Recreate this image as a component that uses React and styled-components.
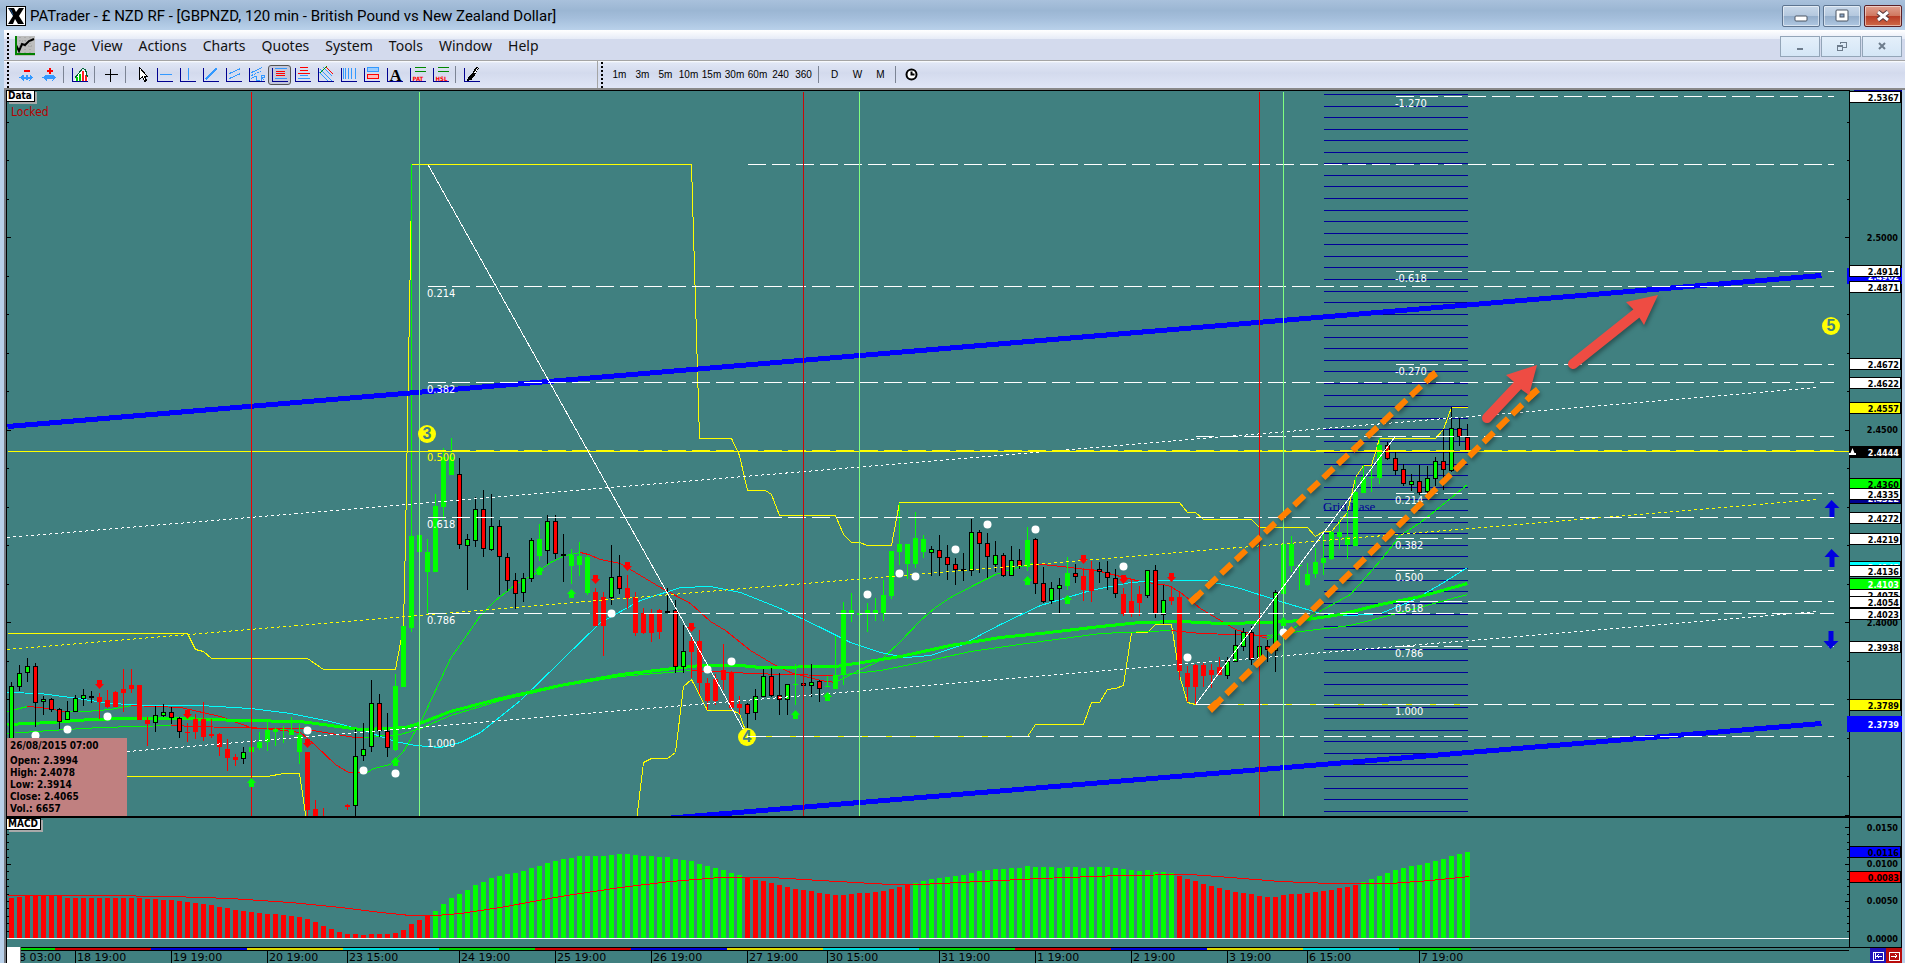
import React from 'react';
import styled, { createGlobalStyle, css } from 'styled-components';

const TEAL = '#408080';
const UI_FONT = '"Noto Sans", "Open Sans", sans-serif';
const CHART_FONT = '"DejaVu Sans Condensed", "DejaVu Sans", sans-serif';

// chart origin inside the window, all chart data is stored in window pixels
const LEFT = 7;
const TOP = 90;
const MACD_TOP = 818;
const TIME_TOP = 947;

const menus = ['Page', 'View', 'Actions', 'Charts', 'Quotes', 'System', 'Tools', 'Window', 'Help'];
const minutes = ['1m', '3m', '5m', '10m', '15m', '30m', '60m', '240', '360'];
const periods = ['D', 'W', 'M'];

// kind, high, low, body top, body bottom. Capital = solid, small = black outline
const candles = `g 682 742 686 741|g 665 691 673 687|g 658 682 666 673|r 663 727 666 703|g 696 715 699 702|r 698 712 699 710
r 708 729 709 722|g 701 720 711 720|g 695 712 698 712|g 689 706 695 699|g 691 703 696 698|R 693 719 697 702
R 690 708 700 707|R 691 707 692 707|R 669 712 689 693|R 669 693 685 689|R 685 720 685 720|R 717 746 720 724
g 706 732 715 723|g 704 717 712 716|r 707 724 712 718|r 717 738 718 732|R 723 742 732 733|R 714 739 719 732
R 702 741 719 737|R 719 738 734 736|R 733 756 734 747|R 739 771 749 758|R 754 766 757 760|g 747 764 752 759
G 742 752 747 752|G 732 750 742 748|G 722 751 730 742|G 728 746 729 732|G 726 743 729 730|G 717 735 730 735
G 724 764 735 752|R 752 816 752 810|R 800 816 809 816|R 808 816 0 0|x|x|R 804 810 805 807|g 729 816 756 806
g 723 761 749 756|g 680 752 703 747|r 694 737 703 731|r 713 757 731 748|G 674 751 686 750|G 626 687 626 687
G 164 632 536 628|G 535 552 535 552|G 539 613 552 572|G 494 572 506 572|G 448 520 457 507|G 438 475 457 475
r 458 549 474 545|g 534 590 539 546|g 497 547 509 541|r 490 557 509 549|g 494 551 526 550|r 520 595 526 557
r 553 591 557 581|r 573 609 580 594|g 573 602 578 593|g 538 582 540 579|G 524 561 539 556|g 515 564 521 551
r 515 559 521 554|g 534 582 554 556|G 549 584 555 566|G 542 576 556 565|G 555 595 557 593|R 588 626 592 626
R 592 656 597 626|g 545 605 577 598|r 555 594 576 589|R 575 609 588 598|R 592 636 597 633|R 608 634 613 633
R 609 642 613 633|R 609 639 610 632|g 588 613 611 613|r 600 673 610 667|g 625 673 651 667|R 637 678 641 652
R 630 694 641 683|R 678 710 683 701|R 674 705 679 701|R 644 690 670 680|R 671 710 672 708|R 696 714 704 708
r 703 736 704 714|g 689 720 696 713|g 669 697 676 697|r 668 697 676 696|r 673 715 695 700|g 684 715 684 700
G 664 705 684 685|r 682 687 683 686|g 664 697 682 686|r 680 702 681 689|G 676 687 686 687|G 636 689 675 689
G 602 685 610 675|G 593 622 610 613|G 613 615 613 615|G 603 632 610 614|G 598 621 610 613|G 580 621 595 613
G 551 599 551 596|G 503 565 544 552|G 544 579 544 564|G 512 568 538 564|G 535 558 539 552|g 546 576 549 553
r 535 576 550 558|r 545 580 557 565|r 558 585 564 570|g 553 581 569 571|g 519 576 532 571|r 530 573 532 544
r 533 578 543 557|g 541 572 555 565|r 553 577 555 576|g 546 576 560 576|r 549 569 560 566|G 527 571 540 567
r 538 594 539 584|r 567 603 583 602|g 582 604 588 601|g 578 613 585 589|G 557 590 573 586|r 564 583 573 577
R 568 601 576 590|R 561 602 569 591|r 562 583 569 572|r 561 590 572 578|r 569 598 578 594|R 588 616 594 614
R 580 617 601 614|R 586 616 594 603|g 570 598 570 596|r 565 618 570 614|g 585 624 600 615|R 586 605 597 601
R 592 680 597 671|R 666 702 673 687|R 664 704 665 687|R 663 687 665 676|R 664 688 670 675|R 657 675 667 675
g 657 679 661 676|g 630 662 645 662|g 628 651 632 647|r 626 665 632 660|g 646 660 646 660|r 640 662 646 650
g 590 672 592 651|G 544 594 544 594|G 536 572 544 566|G 565 590 565 566|G 563 586 574 585|G 548 578 562 574
G 533 575 558 563|G 531 560 532 559|G 520 549 532 537|G 511 559 537 545|G 477 546 492 546|G 465 493 477 493
G 466 492 477 478|G 438 484 445 478|r 442 460 445 459|r 451 475 458 471|r 464 486 469 484|g 474 491 481 485
r 465 495 481 493|g 466 493 478 492|g 457 486 461 479|r 429 490 461 470|g 407 472 428 471|r 418 446 428 437
r 424 452 437 452`
  .split(/[|\n]/)
  .map(row => {
    const [kind, ...values] = row.trim().split(' ');
    return { kind, values: values.map(Number) };
  });

const macd = `898 897 895 895 895 896 896 898 898 898 898 898 898 898 898 898 898 899 899 900 900 901 902 903 904 905 907 908 910 911
912 913 914 914 915 916 917 919 922 926 929 932 934 934 935 934 934 934 933 930 924 920 915 911 904 898 894 890 885 882
878 876 874 873 871 868 866 863 861 859 858 856 856 856 856 855 854 854 855 856 856 857 857 859 860 861 864 866 868 870
873 875 877 880 881 883 885 887 889 890 891 893 894 895 895 894 893 893 892 891 889 887 885 883 881 879 878 877 876 875
873 871 870 869 869 868 868 866 867 867 867 868 867 867 868 867 867 867 868 869 870 871 870 872 872 873 876 879 881 884
886 888 890 892 893 894 896 897 897 895 894 894 893 892 891 890 888 887 885 882 879 876 873 870 868 866 865 863 861 859
856 854 852`
  .split(/\s+/)
  .map(Number);

const isRising = i => (i >= 53 && i <= 91) || (i >= 113 && i <= 145) || i >= 169;

const envelopes = [
  '7,633 187,633 195,649 203,651 211,658 307,658 323,669 395,669 403,626 405,540 411,193 411,164 691,164 699,438 731,438 739,455 747,490 765,490 771,494 779,515 835,515 843,534 851,542 859,542 867,545 891,545 899,502 1179,502 1187,512 1195,512 1203,519 1251,519 1259,527 1307,527 1315,536 1323,531 1331,531 1347,512 1355,477 1363,465 1371,465 1379,438 1435,438 1443,429 1451,407 1467,407',
  '7,776 267,776 283,773 299,773 306,820',
  '636,820 643,762 651,758 667,758 675,752 683,686 691,679 707,710 731,710 739,713 747,736 1027,736 1035,724 1083,724 1091,702 1099,702 1107,689 1115,688 1123,685 1131,632 1147,632 1155,624 1171,624 1179,675 1187,702 1195,704 1467,704',
];

const averages = [
  ['#0f0', '7,733 50,730 100,727 171,725'],
  ['#f00', '171,725 195,726 230,727 270,728 300,728 330,733 355,737 363,737'],
  ['#0f0', '363,737 385,735 400,734 420,728 450,715 500,700 560,686 620,676 691,670'],
  ['#f00', '691,670 730,672 780,674 835,675'],
  ['#0f0', '835,675 880,670 920,662 970,651 1040,641 1100,633 1171,630'],
  ['#f00', '1171,630 1200,633 1267,635'],
  ['#0f0', '1267,635 1300,631 1350,625 1400,612 1467,594'],
  ['#0f0', '7,711 27,706'],
  ['#f00', '27,706 40,707 65,711'],
  ['#0f0', '65,711 85,711 110,709 131,705'],
  ['#f00', '131,705 180,707 220,716 250,727 275,729 300,732 315,745 335,764 348,772 360,772'],
  ['#0f0', '360,772 367,772 373,768 390,764 403,751 420,722 450,658 480,615 495,600 515,584 535,573 550,562 565,555 580,552'],
  ['#f00', '580,552 588,554 600,559 620,563 640,575 660,587 690,603 710,621 725,630 750,650 775,665 790,672 820,680 835,682'],
  ['#0f0', '835,682 860,669 880,660 900,641 920,620 935,607 950,597 975,584 995,574 1020,566 1033,563'],
  ['#f00', '1033,563 1070,567 1100,571 1140,581 1168,585 1180,592 1200,608 1235,629 1267,638'],
  ['#0f0', '1267,638 1290,630 1310,616 1350,594 1380,560 1400,535 1420,522 1440,506 1467,484'],
  ['#0ff', '7,692 40,693 70,697 110,703 150,705 200,705 250,708 290,713 330,721 360,729 395,741 415,745 440,747 460,742 480,732 520,700 560,661 600,622 640,600 680,587 710,586 740,592 780,608 820,627 850,642 880,652 905,657 930,655 960,645 1000,624 1040,605 1090,590 1130,582 1160,580 1205,580 1240,588 1280,601 1320,613 1350,615 1380,613 1410,601 1440,584 1467,567'],
];

const mainAverage =
  '7,724 50,722 90,719 130,718 180,718 240,720 300,721 330,725 360,729 390,728 405,727 419,723 450,711 500,698 560,685 620,674 700,665 740,665 760,667 835,666 855,663 900,656 950,645 1000,637 1040,633 1100,626 1140,622 1180,621 1220,623 1270,622 1300,620 1340,614 1380,604 1420,596 1467,583';

const signalLine =
  '7,895 100,895 170,896 230,898 290,902 340,907 380,912 410,915 435,915 460,913 500,907 560,896 620,887 670,881 720,877 770,877 820,880 890,884 920,884 980,881 1040,878 1120,875 1190,874 1230,877 1280,881 1330,883 1390,883 1430,880 1469,876';

const levels = [
  [1395, 96], [747, 164], [1395, 271], [427, 286], [1395, 364], [427, 382], [1195, 436],
  [1395, 493], [427, 517], [1395, 538], [1395, 570], [1395, 601], [427, 613], [1395, 646],
  [1195, 704], [747, 736],
];

const fibLabels = [
  [427, 297, '0.214'], [427, 393, '0.382'], [427, 528, '0.618'], [427, 624, '0.786'], [427, 747, '1.000'],
  [1395, 107, '-1.270'], [1395, 282, '-0.618'], [1395, 375, '-0.270'], [1395, 504, '0.214'],
  [1395, 549, '0.382'], [1395, 581, '0.500'], [1395, 612, '0.618'], [1395, 657, '0.786'], [1395, 715, '1.000'],
];

const verticals = [
  [251, '#f00000'], [419, '#80ff80'], [803, '#c80808'], [859, '#80ff80'], [1259, '#f00000'], [1283, '#80ff80'],
];

const sellSignals = [[99, 680], [187, 710], [307, 739], [595, 575], [627, 562], [691, 623], [1083, 555], [1123, 575], [1171, 573]];
const buySignals = [[251, 778], [395, 757], [539, 566], [571, 589], [795, 710], [827, 692], [1027, 576], [1067, 595], [1283, 617]];
const dots = [
  [35, 735], [67, 729], [107, 716], [307, 730], [363, 770], [395, 773], [611, 613], [707, 669], [731, 661], [867, 594],
  [899, 573], [915, 576], [955, 549], [987, 524], [1035, 529], [1123, 566], [1187, 657], [1283, 632],
];

const priceTags = [
  { y: 276, text: '2.4902', fill: '#00f', color: '#fff', wide: true },
  { y: 97, text: '2.5367' },
  { y: 271, text: '2.4914' },
  { y: 287, text: '2.4871' },
  { y: 364, text: '2.4672' },
  { y: 383, text: '2.4622' },
  { y: 408, text: '2.4557', fill: '#ff0' },
  { y: 452, text: '2.4444', fill: '#000', color: '#fff' },
  { y: 484, text: '2.4360', fill: '#0f0' },
  { y: 498, text: '2.4322', fill: '#000090', color: '#fff' },
  { y: 494, text: '2.4335' },
  { y: 518, text: '2.4272' },
  { y: 539, text: '2.4219' },
  { y: 567, text: '2.4145', fill: '#0ff', color: '#fff' },
  { y: 571, text: '2.4136' },
  { y: 595, text: '2.4075' },
  { y: 584, text: '2.4103', fill: '#0f0', color: '#fff' },
  { y: 602, text: '2.4054' },
  { y: 614, text: '2.4023' },
  { y: 647, text: '2.3938' },
  { y: 705, text: '2.3789', fill: '#ff0' },
  { y: 724, text: '2.3739', fill: '#00f', color: '#fff', wide: true },
];

const macdTags = [
  { y: 852, text: '0.0116', fill: '#00f' },
  { y: 877, text: '0.0083', fill: '#f00' },
];

const priceScale = [[237, '2.5000'], [429, '2.4500'], [622, '2.4000']];
const macdScale = [[827, '0.0150'], [863, '0.0100'], [900, '0.0050'], [938, '0.0000']];

const priceTicks = Array.from({ length: 19 }, (_, i) => ({
  y: Math.round(121.6 + i * 38.5),
  major: i % 5 === 3,
}));
const macdTicks = Array.from({ length: 15 }, (_, i) => ({
  y: Math.round(827 + i * 7.4),
  major: i % 5 === 0,
}));

const times = [
  [75, '18 19:00'], [171, '19 19:00'], [267, '20 19:00'], [347, '23 15:00'], [459, '24 19:00'], [555, '25 19:00'],
  [651, '26 19:00'], [747, '27 19:00'], [827, '30 15:00'], [939, '31 19:00'], [1035, '1 19:00'], [1131, '2 19:00'],
  [1227, '3 19:00'], [1307, '6 15:00'], [1419, '7 19:00'],
];
const dayColors = ['#d00000', '#0000d8', '#dcdc00', '#00dcdc', '#00d800'];

const Axes = () => <path d='M1 1v14h15' fill='none' stroke='#000090' />;

const icons = {
  'Zoom out': (
    <>
      <path d='M6 4h6' stroke='#f00' strokeWidth='2' />
      <path d='M2 11l4-3v2h2V8l1 1 1-1v2h2V8l4 3-4 3v-2h-2v2l-1-1-1 1v-2H6v2z' fill='#39f' />
    </>
  ),
  'Zoom in': (
    <>
      <path d='M6 4h6M9 1v6' stroke='#f00' strokeWidth='2' />
      <path d='M2 11l4-3h6l4 3-4 3v-2H6v2z' fill='#39f' />
    </>
  ),
  'Chart type': (
    <>
      <path d='M3 14l4-6 4-5 4 2 2 9z' fill='#fff' />
      <path d='M5 14v-4M8 14V7' stroke='#0c0' strokeWidth='2' />
      <path d='M11 14V4M14 14V8' stroke='#f22' strokeWidth='2' />
      <path d='M3 12l4-5 4-5 3 1 2 8' fill='none' stroke='#063' />
      <Axes />
    </>
  ),
  Crosshair: <path d='M8 2v13M2 8h13' stroke='#000' />,
  Pointer: <path d='M6 1v12l3-3 2 5 2-1-2-4h3z' fill='#fff' stroke='#000' />,
  'Horizontal line': (
    <>
      <path d='M3 8h12' stroke='#39f' />
      <Axes />
    </>
  ),
  'Vertical line': (
    <>
      <path d='M9 1v12' stroke='#39f' />
      <Axes />
    </>
  ),
  'Trend line': (
    <>
      <path d='M3 13L14 2' stroke='#39f' strokeWidth='2' />
      <Axes />
    </>
  ),
  Channel: (
    <>
      <path d='M4 7l11-5M4 12l11-5' stroke='#39f' />
      <Axes />
    </>
  ),
  'Linear regression': (
    <>
      <path d='M3 6l11-5M3 12l5-3' stroke='#39f' />
      <path d='M3 9l11-5' stroke='#39f' strokeDasharray='2 1' />
      <path d='M8 9v5h3M13 14V9h3v2h-3l3 3' fill='none' stroke='#39f' />
      <Axes />
    </>
  ),
  'Fibonacci retracement': (
    <>
      <path d='M3 2h12M3 12h12' stroke='#39f' />
      <path d='M4 5h9M4 7h9M4 9h9' stroke='#f00' />
      <Axes />
    </>
  ),
  'Fibonacci extension': (
    <>
      <path d='M5 1h8M5 4h8M3 7h12' stroke='#f00' />
      <path d='M5 9h8M3 12h12' stroke='#39f' />
      <Axes />
    </>
  ),
  Pitchfork: (
    <>
      <path d='M2 6l9 9M3 3l12 12M6 1l9 9' stroke='#39f' />
      <path d='M2 7l7-7' stroke='#090' />
      <path d='M9 1l7 7' stroke='#f00' />
      <Axes />
    </>
  ),
  'Time zones': (
    <>
      <path d='M3 1v11M5 1v11M8 1v11M11 1v11M15 1v11' stroke='#39f' />
      <Axes />
    </>
  ),
  Ranges: (
    <>
      <rect x='4' y='1' width='11' height='4' fill='#9cf' stroke='#39f' />
      <rect x='4' y='8' width='11' height='4' fill='#fbb' stroke='#f00' />
      <Axes />
    </>
  ),
  Text: (
    <>
      <text className='letter' x='3' y='14'>A</text>
      <Axes />
    </>
  ),
  'PAT levels': (
    <>
      <path d='M5 1h11M5 5h11' stroke='#080' />
      <text x='3' y='14'>PAT</text>
      <Axes />
    </>
  ),
  'HSL levels': (
    <>
      <path d='M5 1h11M5 5h11' stroke='#080' />
      <text x='3' y='14'>HSL</text>
      <Axes />
    </>
  ),
  Brush: (
    <>
      <path d='M14 1l-5 8' stroke='#000' strokeWidth='3' />
      <path d='M8 7l3 2-3 4-5 2 2-5z' fill='#000' />
      <path d='M14 2l-3 5' stroke='#fff' />
      <Axes />
    </>
  ),
  Clock: (
    <g shapeRendering='auto'>
      <circle cx='8' cy='8' r='5' fill='#fff' stroke='#000' strokeWidth='2' />
      <path d='M8 5v3h3' fill='none' stroke='#000' strokeWidth='2' />
    </g>
  ),
};

const Tool = ({ name, pressed }) => (
  <ToolButton type='button' aria-label={name} $pressed={pressed}>
    <ToolIcon viewBox='0 0 18 18'>
      <g transform='translate(0.5 0.5)'>{icons[name]}</g>
    </ToolIcon>
  </ToolButton>
);

const TitleBar = () => (
  <Title>
    <AppIcon viewBox='0 0 20 20'>
      <rect width='20' height='20' fill='#000' />
      <rect x='1' y='1' width='18' height='18' fill='#fff' />
      <path d='M2 2h6l2 4 3-4h5l-5 8 5 8h-6l-3-5-2 5H2l5-8z' fill='#000' />
      <path d='M3 3l2 1 2 5' fill='none' stroke='#1a4f8a' />
    </AppIcon>
    <TitleText>PATrader - £ NZD RF - [GBPNZD, 120 min - British Pound vs New Zealand Dollar]</TitleText>
    <WindowButtons>
      <WindowButton type='button' aria-label='Minimize'>
        <svg width='14' height='14'>
          <rect x='1' y='7' width='12' height='5' rx='1' fill='#fff' stroke='#4b5563' />
        </svg>
      </WindowButton>
      <WindowButton type='button' aria-label='Maximize'>
        <svg width='14' height='14'>
          <rect x='1' y='1' width='12' height='11' rx='1' fill='#fff' stroke='#4b5563' />
          <rect x='5' y='5' width='4' height='3' fill='#8fa8c8' stroke='#4b5563' />
        </svg>
      </WindowButton>
      <WindowButton type='button' aria-label='Close' $close>
        <svg width='14' height='14'>
          <path d='M2 3l10 8M12 3L2 11' stroke='#53363a' strokeWidth='5' />
          <path d='M2 3l10 8M12 3L2 11' stroke='#fff' strokeWidth='3' />
        </svg>
      </WindowButton>
    </WindowButtons>
  </Title>
);

const MenuBar = () => (
  <Menu>
    <Gripper />
    <MenuIcon viewBox='0 0 20 20'>
      <rect width='20' height='20' fill='#bdbdbd' />
      <path d='M5 1v16M10 1v16M15 1v16M1 5h18M1 10h18' stroke='#999' strokeDasharray='1 2' />
      <path d='M1 9l3 6 3-7 3 1 4-4 5-2' fill='none' stroke='#000' strokeWidth='2' />
      <path d='M1 0v18h19' fill='none' stroke='#008000' strokeWidth='2' />
    </MenuIcon>
    <MenuItems>
      {menus.map(name => (
        <MenuItem type='button' key={name}>
          {name}
        </MenuItem>
      ))}
    </MenuItems>
    <ChildButtons>
      <ChildButton type='button' aria-label='Minimize chart'>
        <svg width='12' height='12'>
          <path d='M3 9h6' stroke='#6d7c8c' strokeWidth='2' />
        </svg>
      </ChildButton>
      <ChildButton type='button' aria-label='Restore chart'>
        <svg width='12' height='12' fill='none' stroke='#6d7c8c' shapeRendering='crispEdges'>
          <path d='M5 4V2h6v5H8M5 2h6' />
          <path d='M2 5h5v5H2zM2 6h5' />
        </svg>
      </ChildButton>
      <ChildButton type='button' aria-label='Close chart'>
        <svg width='12' height='12'>
          <path d='M3 3l6 6M9 3L3 9' stroke='#6d7c8c' strokeWidth='2' />
        </svg>
      </ChildButton>
    </ChildButtons>
  </Menu>
);

const ToolBars = () => (
  <ToolRow>
    <ToolBar $width={594}>
      <Gripper />
      <Tool name='Zoom out' />
      <Tool name='Zoom in' />
      <Divider />
      <Tool name='Chart type' />
      <Divider />
      <Tool name='Crosshair' />
      <Divider />
      <Tool name='Pointer' />
      <Tool name='Horizontal line' />
      <Tool name='Vertical line' />
      <Tool name='Trend line' />
      <Tool name='Channel' />
      <Tool name='Linear regression' />
      <Tool name='Fibonacci retracement' pressed />
      <Tool name='Fibonacci extension' />
      <Tool name='Pitchfork' />
      <Tool name='Time zones' />
      <Tool name='Ranges' />
      <Tool name='Text' />
      <Tool name='PAT levels' />
      <Tool name='HSL levels' />
      <Divider />
      <Tool name='Brush' />
    </ToolBar>
    <ToolBar>
      <Gripper />
      {minutes.map(name => (
        <TimeButton type='button' key={name}>
          {name}
        </TimeButton>
      ))}
      <Divider />
      {periods.map(name => (
        <TimeButton type='button' key={name}>
          {name}
        </TimeButton>
      ))}
      <Divider />
      <Tool name='Clock' />
    </ToolBar>
  </ToolRow>
);

const Candle = ({ kind, values, x }) => {
  const [high, low, top, bottom] = values;
  const fill = kind.toLowerCase() === 'g' ? '#0f0' : '#f00';
  const outlined = kind === 'g' || kind === 'r';
  return (
    <g>
      <rect x={x} y={high} width='1' height={low - high} fill={outlined ? '#000' : fill} />
      <rect x={x - 2} y={top} width='5' height={bottom - top} fill={outlined ? '#000' : fill} />
      {outlined && bottom - top > 2 && (
        <rect x={x - 1} y={top + 1} width='3' height={bottom - top - 2} fill={fill} />
      )}
    </g>
  );
};

const Wave = ({ x, y, children }) => (
  <g>
    <circle cx={x} cy={y} r='9' fill='#ff0' />
    <WaveText x={x} y={y + 5}>
      {children}
    </WaveText>
  </g>
);

const PriceChart = () => (
  <Plot>
    <g transform={`translate(${-LEFT} ${-TOP})`}>
      <g shapeRendering='crispEdges'>
        <rect x='7' y='90' width='100%' height='1' />
        {Array.from({ length: 63 }, (_, i) => (
          <rect key={i} x='1324' y={Math.round(94 + i * 11.56)} width='144' height='1' fill='#000098' />
        ))}
        {priceTicks.map(({ y, major }) => (
          <rect key={y} x='7' y={y} width={major ? 4 : 2} height='1' />
        ))}
      </g>
      <GridText x='1323' y='511'>Grid Base</GridText>

      <g transform='translate(0.5 0.5)' fill='none' shapeRendering='crispEdges'>
        {envelopes.map(points => (
          <polyline key={points} points={points} stroke='#ff0' />
        ))}
        {averages.map(([color, points]) => (
          <polyline key={points} points={points} stroke={color} />
        ))}
        <polyline points={mainAverage} stroke='#0f0' strokeWidth='3' />
      </g>

      <g shapeRendering='crispEdges'>
        {candles.map(({ kind, values }, i) =>
          kind === 'x' ? null : <Candle key={i} kind={kind} values={values} x={11 + i * 8} />
        )}
      </g>

      <g transform='translate(0.5 0.5)' fill='none' shapeRendering='crispEdges'>
        <path d='M7 426L1821 275M640 820L1821 723' stroke='#00f' strokeWidth='5' />
        <path d='M7 537L1819 387M7 761L1819 611' stroke='#fff' strokeDasharray='3 3' />
        <path d='M7 649L1819 499' stroke='#ff0' strokeDasharray='3 3' />
        {levels.map(([x, y]) => (
          <path key={`${x}-${y}`} d={`M${x} ${y}H1833`} stroke='#fff' strokeDasharray='18 6' />
        ))}
        <path d='M7 451H1849' stroke='#ff0' />
        <path d='M427 450H1833' stroke='#ff0' strokeDasharray='18 6' />
        {verticals.map(([x, color]) => (
          <path key={x} d={`M${x} 91V816`} stroke={color} />
        ))}
        <path d='M428 165L747 736M1195 704L1394 437' stroke='#fff' />
      </g>

      {fibLabels.map(([x, y, text]) => (
        <FibText key={`${x}-${y}`} x={x} y={y}>
          {text}
        </FibText>
      ))}
      <FibText x='427' y='461' $color='#ff0'>0.500</FibText>

      {sellSignals.map(([x, y]) => (
        <path key={x} d={`M${x - 2} ${y}h5v4h2l-4.500 5-4.500-5h2z`} fill='#f00' />
      ))}
      {buySignals.map(([x, y]) => (
        <path key={x} d={`M${x - 2} ${y + 9}h5v-4h2l-4.500-5-4.500 5h2z`} fill='#0f0' />
      ))}
      {dots.map(([x, y]) => (
        <circle key={x} cx={x + 0.5} cy={y + 0.5} r='4' fill='#fff' />
      ))}

      <Wave x={427} y={434}>3</Wave>
      <Wave x={747} y={737}>4</Wave>
      <Wave x={1831} y={326}>5</Wave>
      <path d='M747 736.500h12' stroke='#fff' shapeRendering='crispEdges' />

      <path d='M1831.500 500l8 8h-5v9h-5v-9h-5zM1831.500 549l8 8h-5v10h-5v-10h-5zM1830.500 649l8-8h-5v-10h-5v10h-5z' fill='#0000e0' />

      <Marks>
        <path d='M1192 601L1434 374M1212 708L1536 391' stroke='#ff8000' strokeWidth='6' strokeDasharray='14 6' />
        <path
          d='M1188 600l8-7 5 1-1 4-8 7zM1438 376l-8 6-4-1 2-7 6-4zM1207 707l8-7 6 1-1 4-8 8zM1540 392l-8 7-5-1 1-5 8-6z'
          fill='#ff8000'
        />
        <path d='M1487 418L1519 384' stroke='#ee4c43' strokeWidth='10' strokeLinecap='round' />
        <path d='M1537 365L1506 375L1514 382L1522 390L1529 395Z' fill='#ee4c43' />
        <path d='M1573 364L1637 313' stroke='#ee4c43' strokeWidth='10' strokeLinecap='round' />
        <path d='M1658 295L1626 302L1633 309L1639 317L1644 325Z' fill='#ee4c43' />
      </Marks>
    </g>
  </Plot>
);

const Tag = ({ y, text, fill = '#fff', color = '#000', wide }) => (
  <g>
    {wide ? (
      <rect x='-2' y={y - 8} width='55' height='16' fill={fill} />
    ) : (
      <>
        <rect x='0' y={y - 6} width='52' height='12' />
        <rect x='1' y={y - 5} width='50' height='10' fill={fill} />
      </>
    )}
    <AxisText x='50' y={y + 4} $color={color}>
      {text}
    </AxisText>
  </g>
);

const Scale = ({ top, ticks, labels, tags, children }) => (
  <AxisSvg>
    <g transform={`translate(0 ${-top})`} shapeRendering='crispEdges'>
      <rect x='0' y={top} width='1' height='740' />
      <rect x='52' y={top} width='1' height='740' />
      {ticks.map(({ y, major }) => (
        <rect key={y} x={major ? -4 : -2} y={y} width={major ? 4 : 2} height='1' />
      ))}
      {labels.map(([y, text]) => (
        <AxisText key={text} x='49' y={y + 4}>
          {text}
        </AxisText>
      ))}
      {children}
      {tags.map(tag => (
        <Tag key={tag.text} {...tag} />
      ))}
    </g>
  </AxisSvg>
);

const MacdChart = () => (
  <Plot>
    <g transform={`translate(${-LEFT} ${-MACD_TOP})`} shapeRendering='crispEdges'>
      {macdTicks.map(({ y, major }) => (
        <rect key={y} x='7' y={y} width={major ? 4 : 2} height='1' />
      ))}
      {macd.map((y, i) => (
        <rect key={i} x={9 + i * 8} y={y} width='5' height={938 - y} fill={isRising(i) ? '#0f0' : '#f00'} />
      ))}
      <polyline points={signalLine} transform='translate(0.5 0.5)' fill='none' stroke='#f00' />
      <rect x='7' y='938' width='100%' height='1' fill='#fff' />
    </g>
  </Plot>
);

const TimeAxis = () => (
  <Plot>
    <g transform={`translate(${-LEFT} ${-TIME_TOP})`} shapeRendering='crispEdges'>
      <rect x='7' y='947' width='100%' height='1' />
      <rect x='7' y='950' width='1843' height='1' />
      <rect x='7' y='948' width='48' height='2' fill='#00d800' />
      {Array.from({ length: 15 }, (_, i) => (
        <rect
          key={i}
          x={55 + i * 96}
          y='948'
          width={i === 14 ? 72 : 96}
          height='2'
          fill={dayColors[i % 5]}
        />
      ))}
      <TimeText x='12' y='961'>18 03:00</TimeText>
      {times.map(([x, text]) => (
        <g key={x}>
          <rect x={x} y='951' width='1' height='12' />
          <TimeText x={x + 2} y='961'>
            {text}
          </TimeText>
        </g>
      ))}
    </g>
  </Plot>
);

const App = () => (
  <>
    <GlobalStyle />
    <Shell>
      <TitleBar />
      <MenuBar />
      <ToolBars />
      <Charts>
        <Pane $height={728} $line>
          <PriceChart />
          <Scale top={TOP} ticks={priceTicks} labels={priceScale} tags={priceTags}>
            <rect x='5' y='90' width='48' height='2' fill='#000098' />
          </Scale>
          <Triangle viewBox='0 0 7 7'>
            <path d='M3.500 0l2 5h1.500v2H0V5h1.500z' fill='#fff' />
          </Triangle>
          <Legend>
            <PaneName>Data</PaneName>
            <Locked>Locked</Locked>
          </Legend>
          <DataBox>
            <DataTime>26/08/2015 07:00</DataTime>
            <p>Open: 2.3994</p>
            <p>High: 2.4078</p>
            <p>Low: 2.3914</p>
            <p>Close: 2.4065</p>
            <p>Vol.: 6657</p>
          </DataBox>
        </Pane>
        <Pane $height={129}>
          <MacdChart />
          <Scale top={MACD_TOP} ticks={macdTicks} labels={macdScale} tags={macdTags} />
          <Legend>
            <PaneName>MACD</PaneName>
          </Legend>
        </Pane>
        <TimePane $height={16}>
          <TimeAxis />
          <ScrollButtons>
            <ScrollButton type='button' aria-label='Scroll left' $color='#2014b8'>
              <svg width='12' height='10' fill='none' stroke='#fff' shapeRendering='crispEdges'>
                <path d='M1 1h10v8H1zM3 2v6M4 5h6M7 3L5 5l2 2' />
              </svg>
            </ScrollButton>
            <ScrollButton type='button' aria-label='Scroll right' $color='#b80c0c'>
              <svg width='12' height='10' fill='none' stroke='#fff' shapeRendering='crispEdges'>
                <path d='M1 1h10v8H1zM3 5h6M7 3l2 2-2 2' />
              </svg>
            </ScrollButton>
          </ScrollButtons>
          <Corner />
        </TimePane>
      </Charts>
    </Shell>
  </>
);

export default App;

const GlobalStyle = createGlobalStyle`
  * {
    box-sizing: border-box;
  }

  body {
    margin: 0;
    background: #b9d1ea;
    font-family: ${UI_FONT};
  }

  button {
    padding: 0;
    border: 0;
    background: none;
    font: inherit;
    color: inherit;
  }

  p {
    margin: 0;
  }
`;

const Shell = styled.div`
  display: flex;
  flex-direction: column;
  overflow: hidden;
`;

const Title = styled.header`
  display: flex;
  align-items: center;
  height: 30px;
  padding: 2px 3px 0 6px;
  background: linear-gradient(#a9c1dc, #9bb6d3 35%, #a4bedb 60%, #b9d1ea);
`;

const AppIcon = styled.svg`
  width: 20px;
  height: 20px;
`;

const TitleText = styled.h1`
  flex: 1;
  margin: 0 0 0 4px;
  font: 400 15px/20px Roboto, 'Noto Sans', sans-serif;
  white-space: nowrap;
  color: #000;
`;

const WindowButtons = styled.div`
  display: flex;
  gap: 3px;
`;

const WindowButton = styled.button`
  display: flex;
  align-items: center;
  justify-content: center;
  width: 38px;
  height: 22px;
  border: 1px solid #5d7490;
  border-radius: 2px;
  box-shadow: inset 0 0 0 1px rgba(255, 255, 255, 0.5);
  background: linear-gradient(#c8d8ea, #b4c8de 48%, #93adca 50%, #b0c8e2);

  ${props =>
    props.$close &&
    css`
      border-color: #5c2026;
      background: linear-gradient(#e0a090, #d07860 48%, #b83a24 50%, #cf6a48);
    `}
`;

const Menu = styled.nav`
  display: flex;
  align-items: center;
  height: 31px;
  margin-left: 4px;
  padding: 2px 3px 0 0;
  border-bottom: 1px solid #a5a5a5;
  background: linear-gradient(#fff, #e6ebf7 9px, #d3daed 9px, #d3daed);
`;

const Gripper = styled.div`
  width: 2px;
  height: 26px;
  margin: 0 5px 0 3px;
  background: repeating-linear-gradient(#000 0 2px, transparent 2px 4px);
`;

const MenuIcon = styled.svg`
  width: 20px;
  height: 20px;
  margin-left: 1px;
`;

const MenuItems = styled.div`
  display: flex;
  flex: 1;
  gap: 16px;
  margin-left: 8px;
`;

const MenuItem = styled.button`
  font-size: 14px;
  line-height: 20px;
  color: #111;
`;

const ChildButtons = styled.div`
  display: flex;
  gap: 1px;
`;

const ChildButton = styled.button`
  display: flex;
  align-items: center;
  justify-content: center;
  width: 40px;
  height: 21px;
  border: 1px solid #93a5b8;
  background: linear-gradient(#e4effa, #d4e6f6);
`;

const ToolRow = styled.div`
  display: flex;
  height: 29px;
  margin-left: 4px;
  border-bottom: 2px solid #8a8a8a;
  background: linear-gradient(#fff, #e0e6f5 2px, #d3daed 12px, #e0e6f6);
`;

const ToolBar = styled.div`
  display: flex;
  align-items: center;
  width: ${props => (props.$width ? `${props.$width}px` : 'auto')};
  border-right: ${props => (props.$width ? '1px solid #a5a5a5' : 'none')};
`;

const Divider = styled.div`
  width: 1px;
  height: 17px;
  margin: 0 4px 0 3px;
  background: #7c8494;
`;

const ToolButton = styled.button`
  display: flex;
  align-items: center;
  justify-content: center;
  width: 23px;
  height: 20px;

  ${props =>
    props.$pressed &&
    css`
      border: 1px solid #555;
      border-radius: 3px;
      background: #c4c8dc;
    `}
`;

const ToolIcon = styled.svg`
  flex: none;
  width: 18px;
  height: 18px;
  shape-rendering: crispEdges;

  & text {
    font: bold 6px ${CHART_FONT};
    fill: #f00;
  }

  & .letter {
    font: bold 17px 'Liberation Serif', serif;
    fill: #000;
  }
`;

const TimeButton = styled.button`
  width: 23px;
  height: 20px;
  font-family: 'Liberation Sans', Arial, sans-serif;
  font-size: 10px;
  line-height: 20px;
  white-space: nowrap;
  text-align: center;
  color: #000;
`;

const Charts = styled.main`
  margin: 0 3px 0 4px;
  border-left: 2px solid #777c84;
  background: ${TEAL};
`;

const Pane = styled.section`
  position: relative;
  display: flex;
  height: ${props => props.$height}px;
  border-left: 1px solid #000;
  border-bottom: ${props => (props.$line ? '2px solid #000' : 'none')};
`;

const Plot = styled.svg`
  flex: 1;
  min-width: 0;
  height: 100%;
`;

const AxisSvg = styled.svg`
  flex: none;
  width: 53px;
  height: 100%;
  overflow: visible;
  clip-path: inset(0 0 0 -8px);
`;

const AxisText = styled.text`
  font: bold 9px ${CHART_FONT};
  text-anchor: end;
  fill: ${props => props.$color || '#000'};
`;

const FibText = styled.text`
  font: 11px ${CHART_FONT};
  fill: ${props => props.$color || '#fff'};
`;

const GridText = styled.text`
  font: 13px 'Liberation Serif', serif;
  fill: #000098;
`;

const WaveText = styled.text`
  font: bold 16px 'Liberation Sans', Arial, sans-serif;
  text-anchor: middle;
  fill: ${TEAL};
`;

const TimeText = styled.text`
  font: 11px 'DejaVu Sans', sans-serif;
  fill: #000;
`;

const Marks = styled.g`
  filter: drop-shadow(1px 3px 2px rgba(0, 0, 0, 0.35));
`;

const Triangle = styled.svg`
  position: absolute;
  top: 358px;
  right: 46px;
  width: 7px;
  height: 7px;
`;

const Legend = styled.div`
  position: absolute;
  top: 0;
  left: 0;
`;

const PaneName = styled.div`
  width: fit-content;
  padding: 0 2px 0 1px;
  border: 1px solid #000;
  border-left: 0;
  box-shadow: 2px 2px 0 #aaa;
  background: #fff;
  font: bold 10px/10px ${CHART_FONT};
  color: #000;
`;

const Locked = styled.p`
  padding: 3px 0 0 4px;
  font: 12px/14px ${CHART_FONT};
  color: #b80000;
`;

const DataBox = styled.div`
  position: absolute;
  bottom: 0;
  left: 0;
  width: 120px;
  height: 78px;
  padding: 2px 0 0 3px;
  background: #c08080;
  font: bold 10px/12px ${CHART_FONT};
  color: #000;
`;

const DataTime = styled.p`
  padding-bottom: 3px;
`;

const TimePane = styled(Pane)`
  overflow: hidden;
`;

const ScrollButtons = styled.div`
  display: flex;
  justify-content: flex-end;
  width: 53px;
  border-top: 1px solid #000;
`;

const ScrollButton = styled.button`
  display: flex;
  align-items: center;
  justify-content: center;
  width: 16px;
  height: 15px;
  background: ${props => props.$color};
`;

const Corner = styled.div`
  position: absolute;
  left: 0;
  bottom: 0;
  width: 14px;
  height: 16px;
  border-right: 1px solid #777;
  background: #fff;
`;
